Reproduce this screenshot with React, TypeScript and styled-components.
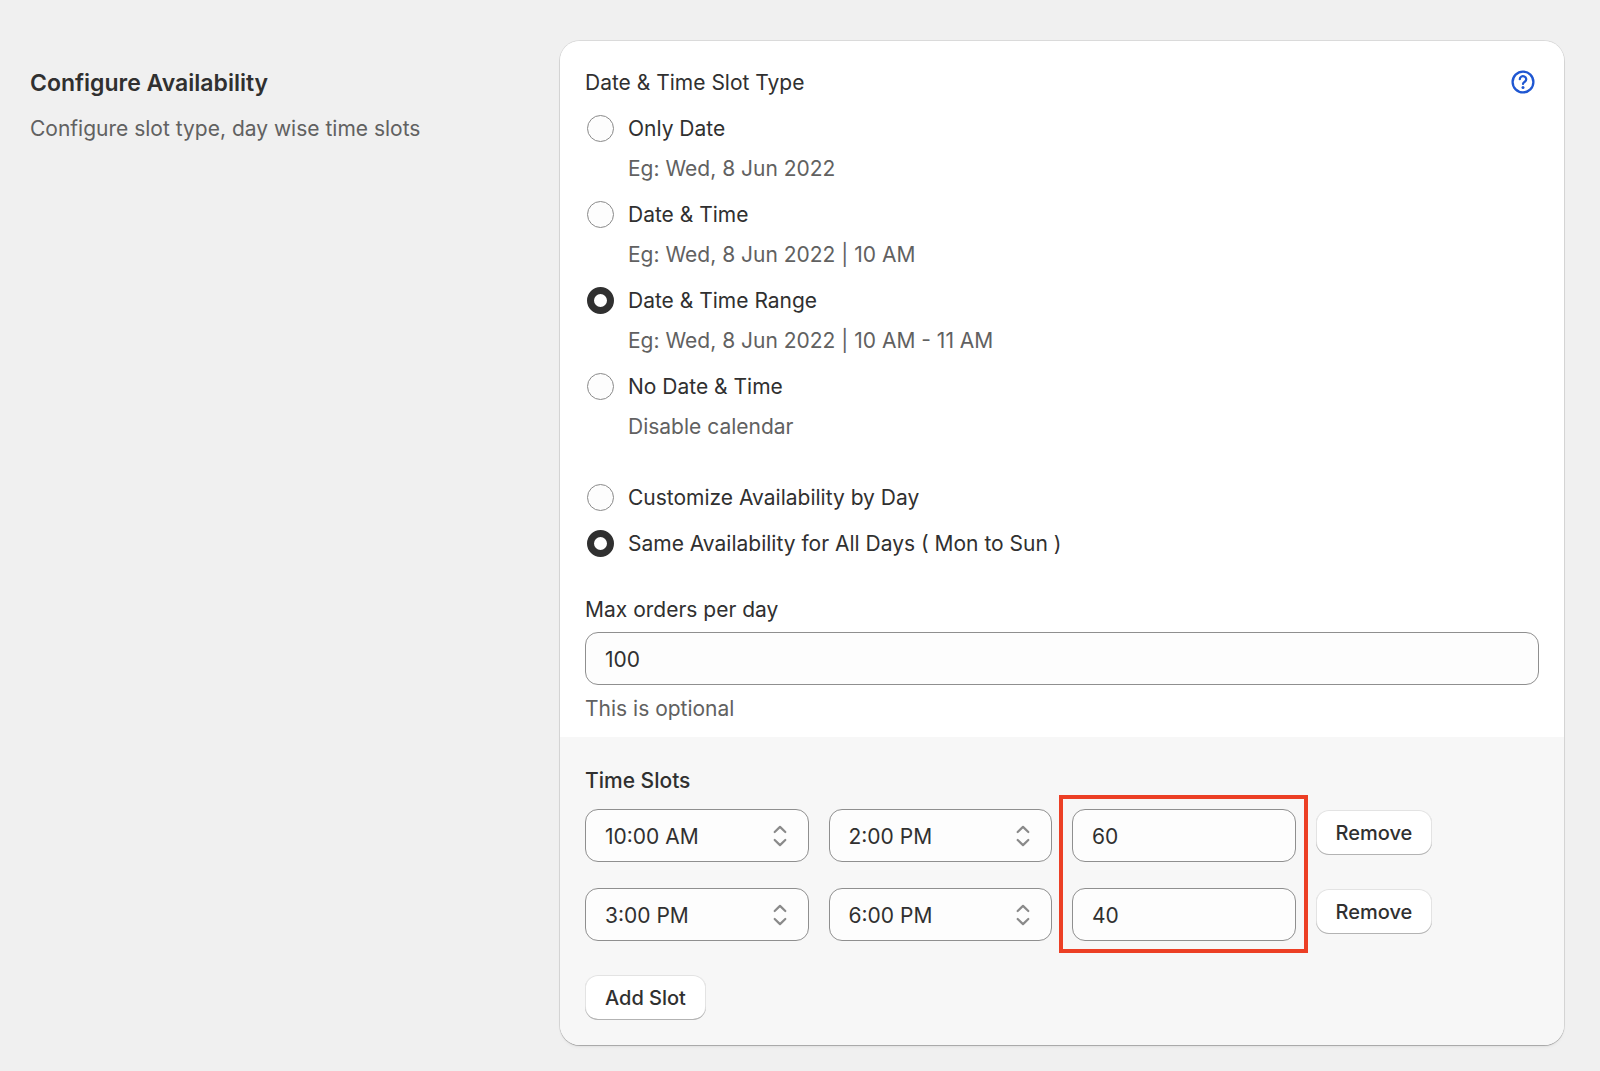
import React, { useId, useState } from "react";
import styled, { createGlobalStyle } from "styled-components";

const GlobalStyle = createGlobalStyle`
  *, *::before, *::after { box-sizing: border-box; }
  body {
    margin: 0;
    background: #f0f0f0;
    color: #303030;
    font-family: Inter, "Liberation Sans", sans-serif;
    font-size: 21px;
    line-height: 34px;
    -webkit-font-smoothing: antialiased;
  }
  button, input, select { font-family: inherit; color: inherit; }
`;

const Page = styled.main`
  display: grid;
  grid-template-columns: minmax(0, 1fr) minmax(0, 2fr);
  gap: 28px;
  align-items: start;
  padding: 41px 36px 24px 30px;
`;

const Intro = styled.header`
  display: grid;
  gap: 12px;
  padding-top: 25px;
`;

const Heading = styled.h2`
  margin: 0;
  font-size: 23px;
  font-weight: 600;
  line-height: 34px;
`;

const Muted = styled.p`
  margin: 0;
  color: #616161;
`;

const Card = styled.div`
  overflow: hidden;
  border-radius: 20px;
  background: #ffffff;
  box-shadow: 0 0 0 1px rgba(0, 0, 0, 0.09), 0 1px 1px rgba(0, 0, 0, 0.22),
    0 3px 3px rgba(0, 0, 0, 0.03);
`;

const Section = styled.section<{ $subdued?: boolean }>`
  padding: ${(p) => (p.$subdued ? "27px 25px 25px" : "25px 25px 11px")};
  background: ${(p) => (p.$subdued ? "#f7f7f7" : "#ffffff")};
`;

const TitleRow = styled.div`
  display: flex;
  align-items: flex-start;
  justify-content: space-between;
  padding-right: 4px;
  margin-bottom: 12px;
`;

const HelpButton = styled.button`
  display: flex;
  padding: 4px 0;
  border: 0;
  background: none;
  color: #1f57d2;
  cursor: pointer;
`;

const ChoiceGroup = styled.div<{ $gapAfter: number }>`
  display: grid;
  gap: 12px;
  margin-bottom: ${(p) => p.$gapAfter}px;
`;

const Choice = styled.div`
  display: grid;
  grid-template-columns: 27px minmax(0, 1fr);
  column-gap: 14px;
  row-gap: 6px;
  align-items: start;
  padding-left: 2px;
`;

const ChoiceHelp = styled(Muted)`
  grid-column: 2;
`;

const Radio = styled.input`
  appearance: none;
  width: 27px;
  height: 27px;
  margin: 3px 0 0;
  border: 1px solid #8a8a8a;
  border-radius: 50%;
  background: #fdfdfd;
  cursor: pointer;

  &:checked {
    border: 7px solid #303030;
    background: #ffffff;
  }
`;

const FieldLabel = styled.label`
  display: block;
  margin-bottom: 5px;
`;

const TextField = styled.input`
  display: block;
  width: 100%;
  height: 53px;
  padding: 2px 19px 0;
  border: 1px solid #8f8f8f;
  border-radius: 13px;
  background: #fdfdfd;
  font-size: 21px;
`;

const FieldHelp = styled(Muted)`
  margin-top: 7px;
`;

const SlotsTitle = styled.h3`
  margin: 0 0 11px;
  font-size: 21px;
  font-weight: 550;
  line-height: 34px;
`;

const SlotGrid = styled.div`
  position: relative;
  display: grid;
  grid-template-columns: repeat(4, minmax(0, 1fr));
  gap: 26px 20px;
  align-items: start;
  margin-bottom: 33px;
`;

const SelectBox = styled.div`
  display: grid;
  align-items: center;

  > * { grid-area: 1 / 1; }
  > svg {
    justify-self: end;
    margin-right: 22px;
    pointer-events: none;
  }
`;

const SelectField = styled.select`
  appearance: none;
  width: 100%;
  height: 53px;
  padding: 2px 48px 0 19px;
  border: 1px solid #8f8f8f;
  border-radius: 13px;
  background: #fdfdfd;
  font-size: 21px;
  cursor: pointer;
`;

const Button = styled.button`
  justify-self: start;
  height: 45px;
  margin-top: 1px;
  padding: 0 20px;
  border: 0;
  border-radius: 13px;
  background: #ffffff;
  box-shadow: inset 0 -1px 0 #b3b3b3, inset 0 0 0 1px #e3e3e3;
  font-size: 20px;
  font-weight: 550;
  line-height: 32px;
  cursor: pointer;
`;

const Highlight = styled.div`
  position: absolute;
  grid-column: 3 / 4;
  grid-row: 1 / 3;
  inset: -14px -12px -12px -13px;
  border: 4px solid #ec3f25;
  pointer-events: none;
`;

const QuestionIcon = () => (
  <svg width="24" height="24" viewBox="0 0 24 24" fill="none" stroke="currentColor" aria-hidden="true">
    <circle cx="12" cy="12" r="10.4" strokeWidth="2.3" />
    <path d="M8.8 9.2a3.200 3 0 1 1 5.200 2.300c-1.200.9-2 1.300-2 2.400" strokeWidth="2.300" strokeLinecap="round" />
    <circle cx="12" cy="17.400" r="1.500" fill="currentColor" stroke="none" />
  </svg>
);

const SelectIcon = () => (
  <svg width="14" height="22" viewBox="0 0 14 22" fill="none" stroke="#8a8a8a" strokeWidth="2.2" strokeLinecap="round" strokeLinejoin="round" aria-hidden="true">
    <path d="M1.700 7 7 1.900 12.300 7M1.700 15 7 20.100 12.300 15" />
  </svg>
);

type RadioOptionProps = {
  name: string;
  label: string;
  help?: string;
  checked: boolean;
  onSelect: () => void;
};

function RadioOption({ name, label, help, checked, onSelect }: RadioOptionProps) {
  const id = useId();
  return (
    <Choice>
      <Radio type="radio" id={id} name={name} checked={checked} onChange={onSelect} />
      <label htmlFor={id}>{label}</label>
      {help && <ChoiceHelp>{help}</ChoiceHelp>}
    </Choice>
  );
}

const TIMES = ["10:00 AM", "2:00 PM", "3:00 PM", "6:00 PM"];

function TimeSelect({ label, value }: { label: string; value: string }) {
  return (
    <SelectBox>
      <SelectField aria-label={label} defaultValue={value}>
        {TIMES.map((time) => (
          <option key={time}>{time}</option>
        ))}
      </SelectField>
      <SelectIcon />
    </SelectBox>
  );
}

const SLOT_TYPES = [
  { label: "Only Date", help: "Eg: Wed, 8 Jun 2022" },
  { label: "Date & Time", help: "Eg: Wed, 8 Jun 2022 | 10 AM" },
  { label: "Date & Time Range", help: "Eg: Wed, 8 Jun 2022 | 10 AM - 11 AM" },
  { label: "No Date & Time", help: "Disable calendar" },
];

const AVAILABILITY = ["Customize Availability by Day", "Same Availability for All Days ( Mon to Sun )"];

const SLOTS = [
  { from: "10:00 AM", to: "2:00 PM", limit: "60" },
  { from: "3:00 PM", to: "6:00 PM", limit: "40" },
];

export default function App() {
  const [slotType, setSlotType] = useState(2);
  const [availability, setAvailability] = useState(1);

  return (
    <>
      <GlobalStyle />
      <Page>
        <Intro>
          <Heading>Configure Availability</Heading>
          <Muted>Configure slot type, day wise time slots</Muted>
        </Intro>
        <Card>
          <Section>
            <TitleRow>
              <span id="slot-type">Date &amp; Time Slot Type</span>
              <HelpButton type="button" aria-label="Help">
                <QuestionIcon />
              </HelpButton>
            </TitleRow>
            <ChoiceGroup $gapAfter={37} role="radiogroup" aria-labelledby="slot-type">
              {SLOT_TYPES.map((option, index) => (
                <RadioOption
                  key={option.label}
                  name="slotType"
                  {...option}
                  checked={slotType === index}
                  onSelect={() => setSlotType(index)}
                />
              ))}
            </ChoiceGroup>
            <ChoiceGroup $gapAfter={32} role="radiogroup" aria-label="Availability">
              {AVAILABILITY.map((label, index) => (
                <RadioOption
                  key={label}
                  name="availability"
                  label={label}
                  checked={availability === index}
                  onSelect={() => setAvailability(index)}
                />
              ))}
            </ChoiceGroup>
            <FieldLabel htmlFor="max-orders">Max orders per day</FieldLabel>
            <TextField id="max-orders" inputMode="numeric" defaultValue="100" />
            <FieldHelp>This is optional</FieldHelp>
          </Section>
          <Section $subdued>
            <SlotsTitle>Time Slots</SlotsTitle>
            <SlotGrid>
              {SLOTS.map((slot) => (
                <React.Fragment key={slot.from}>
                  <TimeSelect label="Start time" value={slot.from} />
                  <TimeSelect label="End time" value={slot.to} />
                  <TextField aria-label="Max orders" inputMode="numeric" defaultValue={slot.limit} />
                  <Button type="button">Remove</Button>
                </React.Fragment>
              ))}
              <Highlight />
            </SlotGrid>
            <Button type="button">Add Slot</Button>
          </Section>
        </Card>
      </Page>
    </>
  );
}
